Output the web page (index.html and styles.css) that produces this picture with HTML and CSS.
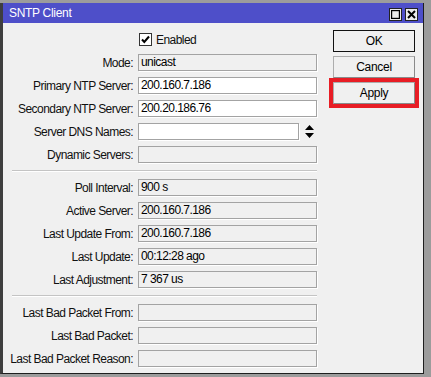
FILE: index.html
```html
<!DOCTYPE html>
<html lang="en">
<head>
  <meta charset="UTF-8" />
  <title>SNTP Client</title>
  <link rel="stylesheet" href="styles.css">
</head>
<body>

  <div class="window">

    <!-- ───── title bar ───── -->
    <div class="titlebar">
      <span class="title">SNTP Client</span>
      <div class="title-btns">
        <span class="tbtn">
          <svg width="9" height="9" viewBox="0 0 9 9"><rect x="0.5" y="0.5" width="8" height="8" fill="none" stroke="#000" stroke-width="1.4"/></svg>
        </span>
        <span class="tbtn">
          <svg width="9" height="9" viewBox="0 0 9 9"><path d="M1 1 L8 8 M8 1 L1 8" stroke="#000" stroke-width="2"/></svg>
        </span>
      </div>
    </div>

    <!-- ───── dialog body ───── -->
    <div class="dialog">

      <div class="form">
        <div class="row">
          <span class="label"></span>
          <label class="check">
            <span class="box">
              <svg width="11" height="11" viewBox="0 0 11 11"><path d="M2 5.5 L4.3 8 L9 2.5" fill="none" stroke="#000" stroke-width="2"/></svg>
            </span>
            Enabled
          </label>
        </div>

        <div class="row"><span class="label">Mode:</span><span class="field ro">unicast</span></div>
        <div class="row"><span class="label">Primary NTP Server:</span><span class="field">200.160.7.186</span></div>
        <div class="row"><span class="label">Secondary NTP Server:</span><span class="field">200.20.186.76</span></div>
        <div class="row">
          <span class="label">Server DNS Names:</span>
          <span class="field-wrap">
            <span class="field short"></span>
            <svg class="spin" width="9" height="13" viewBox="0 0 9 13"><path d="M4.5 0 L9 5 L0 5 Z M0 8 L9 8 L4.5 13 Z" fill="#000"/></svg>
          </span>
        </div>
        <div class="row"><span class="label">Dynamic Servers:</span><span class="field ro"></span></div>

        <div class="sep"></div>

        <div class="row"><span class="label">Poll Interval:</span><span class="field ro">900 s</span></div>
        <div class="row"><span class="label">Active Server:</span><span class="field ro">200.160.7.186</span></div>
        <div class="row"><span class="label">Last Update From:</span><span class="field ro">200.160.7.186</span></div>
        <div class="row"><span class="label">Last Update:</span><span class="field ro">00:12:28 ago</span></div>
        <div class="row"><span class="label">Last Adjustment:</span><span class="field ro">7 367 us</span></div>

        <div class="sep"></div>

        <div class="row"><span class="label">Last Bad Packet From:</span><span class="field ro"></span></div>
        <div class="row"><span class="label">Last Bad Packet:</span><span class="field ro"></span></div>
        <div class="row"><span class="label">Last Bad Packet Reason:</span><span class="field ro"></span></div>
      </div>

      <!-- ───── buttons ───── -->
      <div class="actions">
        <button class="btn default">OK</button>
        <button class="btn">Cancel</button>
        <button class="btn marked">Apply</button>
      </div>

    </div>
  </div>

</body>
</html>
```

FILE: styles.css
```css
:root {
  --c-frame:     #9c9c9c;
  --c-frame-dk:  #3e3e3e;
  --c-title:     #4e4fc9;
  --c-face:      #f0f0f0;
  --c-field-bd:  #a3a3a3;
  --c-sep:       #c4c4c4;
  --c-mark:      #e81d25;

  --font-ui: "Liberation Sans", Arial, sans-serif;
}

/* ───── page + window frame ───── */
html, body {
  margin: 0;
  height: 100%;
}
body {
  background: var(--c-frame);
  font-family: var(--font-ui);
  font-size: 12px;
  letter-spacing: -0.55px;
  color: #111;
  overflow: hidden;
}

.window {
  margin-top: 3px;
  width: 420px;
  height: 370px;
  border-left: 3px solid var(--c-frame-dk);
  border-right: 1px solid #1e1e1e;
  border-bottom: 1px solid #1e1e1e;
  background: var(--c-face);
  display: flex;
  flex-direction: column;
}

/* ───── title bar ───── */
.titlebar {
  height: 20px;
  flex: none;
  background: var(--c-title);
  display: flex;
  align-items: center;
  justify-content: space-between;
  padding: 0 5px 0 6px;
}
.title {
  color: #fff;
  font-size: 12px;
  letter-spacing: -0.3px;
}
.title-btns {
  display: flex;
  gap: 3px;
  margin-top: 3px;
}
.tbtn {
  width: 11px;
  height: 11px;
  border: 1px solid #222;
  background: #ececec;
  display: flex;
  align-items: center;
  justify-content: center;
}

/* ───── dialog ───── */
.dialog {
  flex: 1;
  display: flex;
  align-items: flex-start;
}

.form {
  width: 314px;
  padding-top: 8px;
  display: flex;
  flex-direction: column;
  gap: 6px;
}

.row {
  display: grid;
  grid-template-columns: 130px 179px;
  column-gap: 5px;
  height: 17px;
  align-items: center;
}
.label {
  text-align: right;
  white-space: nowrap;
}

.field {
  box-sizing: border-box;
  height: 17px;
  border: 1px solid var(--c-field-bd);
  background: #fff;
  padding: 0 2px;
  line-height: 15px;
  white-space: nowrap;
  color: #000;
  box-shadow: 1px 1px 0 #fff;
}
.field.ro {
  background: var(--c-face);
}
.field-wrap {
  display: flex;
  align-items: center;
  gap: 6px;
}
.field.short {
  width: 161px;
}

/* checkbox */
.check {
  display: flex;
  align-items: center;
  gap: 4px;
  margin-left: 1px;
}
.box {
  box-sizing: border-box;
  width: 13px;
  height: 13px;
  border: 1px solid #333;
  background: #fff;
  display: flex;
  align-items: center;
  justify-content: center;
}

.sep {
  margin: 1px 0 1px 9px;
  height: 1px;
  background: var(--c-sep);
  border-bottom: 1px solid #fff;
}

/* ───── buttons ───── */
.actions {
  margin-left: 16px;
  padding-top: 7px;
  display: flex;
  flex-direction: column;
  gap: 4px;
}
.btn {
  box-sizing: border-box;
  width: 82px;
  height: 22px;
  font-family: var(--font-ui);
  font-size: 12px;
  letter-spacing: -0.3px;
  color: #000;
  background: var(--c-face);
  border: 1px solid #adadad;
  border-right-color: #8a8a8a;
  border-bottom-color: #8a8a8a;
  padding: 0;
}
.btn.default {
  border: 1px solid #111;
}
.btn.marked {
  outline: 4px solid var(--c-mark);
  outline-offset: 0;
}
```
